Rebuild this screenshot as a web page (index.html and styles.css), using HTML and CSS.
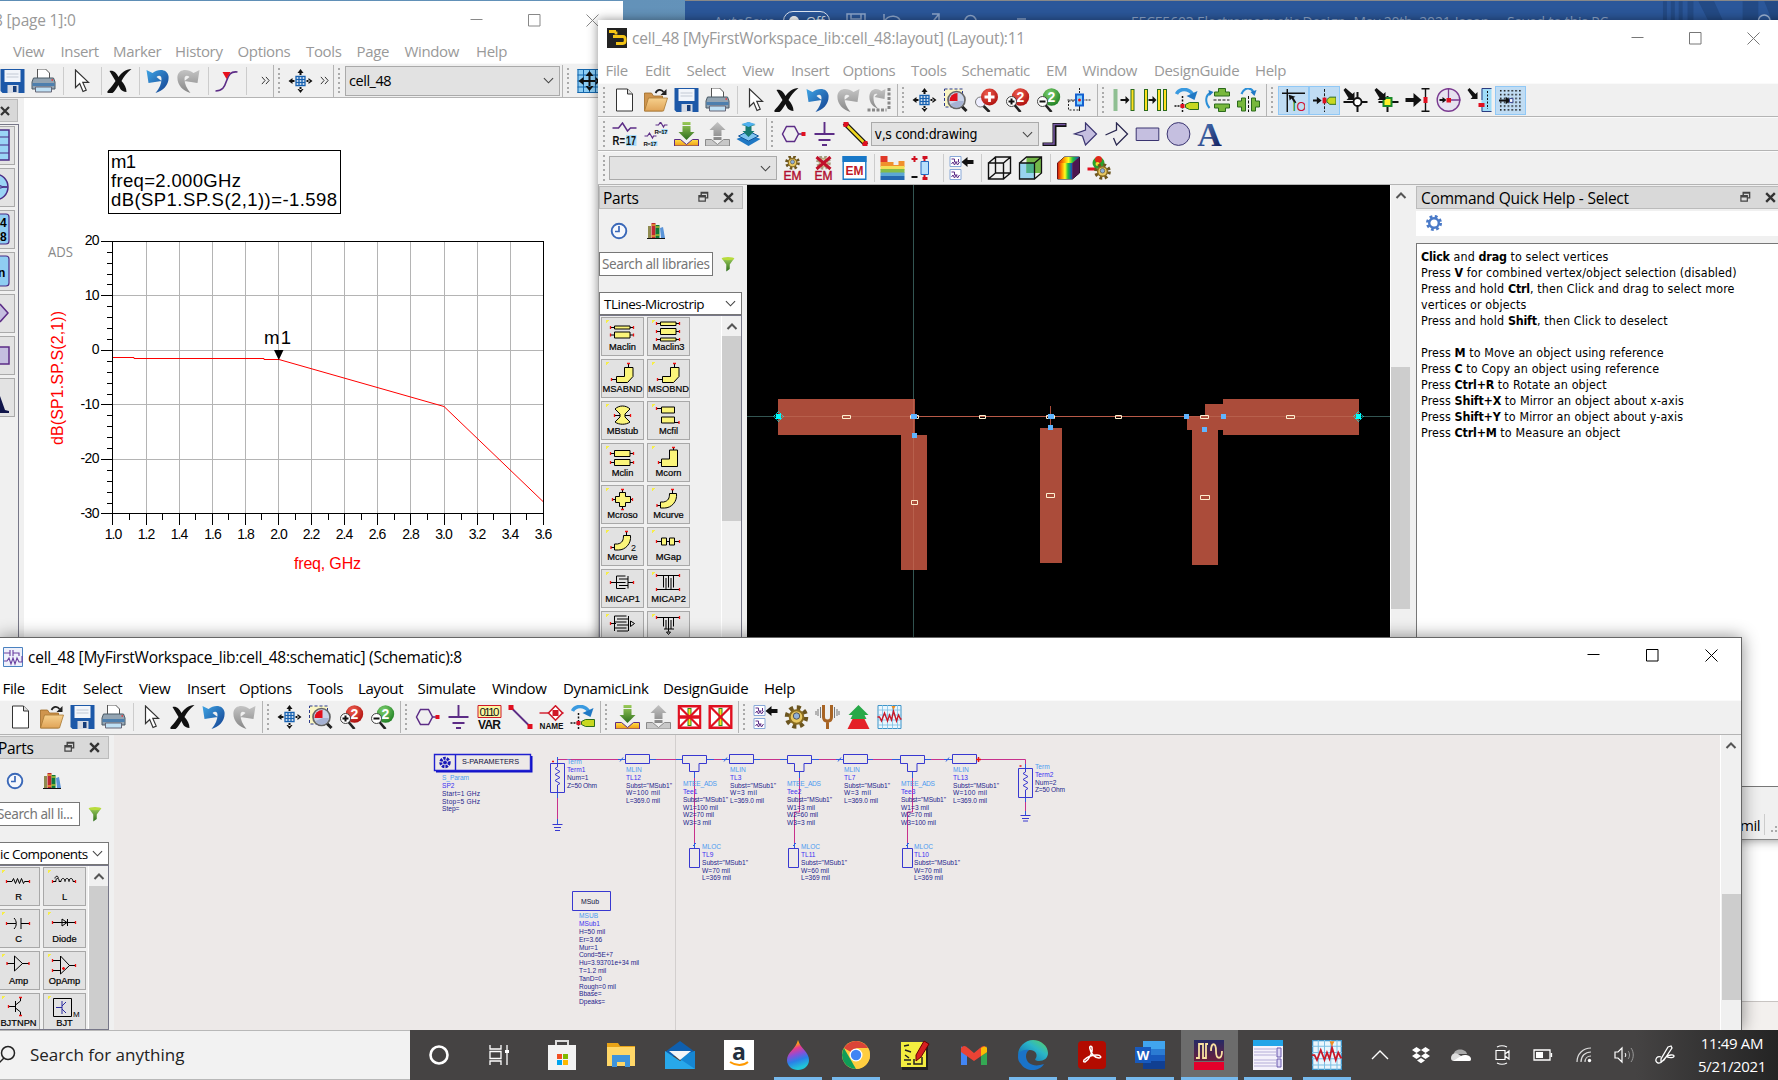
FILE: index.html
```html
<!DOCTYPE html>
<html lang="en">
<head>
<meta charset="utf-8">
<title>Desktop</title>
<link rel="stylesheet" href="styles.css">
</head>
<body>
<svg class="sprite" xmlns="http://www.w3.org/2000/svg">
  <defs>
    <linearGradient id="gBlue" x1="0" y1="0" x2="1" y2="1"><stop offset="0" stop-color="#3fa4e4"/><stop offset="1" stop-color="#123f8f"/></linearGradient>
    <linearGradient id="gFold" x1="0" y1="0" x2="0" y2="1"><stop offset="0" stop-color="#f6d08c"/><stop offset="1" stop-color="#e0a458"/></linearGradient>
    <linearGradient id="gGold" x1="0" y1="0" x2="0" y2="1"><stop offset="0" stop-color="#ffe14a"/><stop offset="1" stop-color="#f09a10"/></linearGradient>
    <linearGradient id="gGreen" x1="0" y1="0" x2="0" y2="1"><stop offset="0" stop-color="#9ccb5a"/><stop offset="1" stop-color="#2c6e1c"/></linearGradient>
    <linearGradient id="gGrey" x1="0" y1="0" x2="0" y2="1"><stop offset="0" stop-color="#c4c4c4"/><stop offset="1" stop-color="#868686"/></linearGradient>
    <linearGradient id="gNavy" x1="0" y1="0" x2="1" y2="1"><stop offset="0" stop-color="#5b8fd0"/><stop offset="1" stop-color="#0a1150"/></linearGradient>
    <linearGradient id="gRain" x1="0" y1="0" x2="1" y2="0"><stop offset="0" stop-color="#d01010"/><stop offset=".3" stop-color="#ff9d00"/><stop offset=".5" stop-color="#ffff20"/><stop offset=".7" stop-color="#20c040"/><stop offset="1" stop-color="#1040d0"/></linearGradient>
    <radialGradient id="gRed" cx=".4" cy=".3" r=".8"><stop offset="0" stop-color="#f06050"/><stop offset="1" stop-color="#a80808"/></radialGradient>
    <radialGradient id="gGrn" cx=".4" cy=".3" r=".8"><stop offset="0" stop-color="#7fd070"/><stop offset="1" stop-color="#177a1c"/></radialGradient>
    <linearGradient id="gDrop" x1="0" y1="0" x2=".25" y2="1"><stop offset="0" stop-color="#ffd400"/><stop offset=".22" stop-color="#ff9a1a"/><stop offset=".35" stop-color="#e83d8a"/><stop offset=".55" stop-color="#8a4fd8"/><stop offset=".75" stop-color="#2a7fe8"/><stop offset="1" stop-color="#21c4d8"/></linearGradient>
    <linearGradient id="gEdge" x1="1" y1="0" x2="0" y2="1"><stop offset="0" stop-color="#5fd35a"/><stop offset=".4" stop-color="#2bb6c8"/><stop offset="1" stop-color="#0d5cb0"/></linearGradient>
    <linearGradient id="gAds" x1="0" y1="0" x2="0" y2="1"><stop offset="0" stop-color="#262a66"/><stop offset="1" stop-color="#6a1f3c"/></linearGradient>
    <pattern id="dots" width="4" height="4" patternUnits="userSpaceOnUse"><rect x="1" y="1" width="1.6" height="1.6" fill="#111"/></pattern>
  </defs>

  <symbol id="new" viewBox="0 0 24 24"><path d="M4 1h11l5 5v17H4z" fill="#fff" stroke="#333"/><path d="M15 1v5h5" fill="#ddd" stroke="#333"/></symbol>
  <symbol id="open" viewBox="0 0 24 24"><path d="M1 23V5h7l2 3h9v15z" fill="#cf954e" stroke="#a06a24" stroke-width=".8"/><path d="M1 23L5 10h19l-4 13z" fill="url(#gFold)" stroke="#a87832" stroke-width=".8"/><path d="M12 5c2-4 6-4 8-1" fill="none" stroke="#222" stroke-width="1.7"/><path d="M23 1v6h-6z" fill="#222"/></symbol>
  <symbol id="save" viewBox="0 0 24 24"><path d="M0 0h24v24H2l-2-2z" fill="#1c58a8"/><path d="M4 1h16v12H4z" fill="#f2f5fa"/><path d="M6 5h12M6 8h12" stroke="#c2c9d4"/><path d="M7 16h11v8H7z" fill="#d5dae4"/><path d="M12.500 17h3.500v6h-3.500z" fill="#163c78"/></symbol>
  <symbol id="print" viewBox="0 0 24 24"><path d="M6 10V0h8l4 4v6" fill="#fff" stroke="#555"/><path d="M2 9h20l1.500 4v7H.5v-7z" fill="#93a4b2" stroke="#4a5a66"/><path d="M1 14h22v3H1z" fill="#4d7fae"/><path d="M4 18h16v5H4z" fill="#bfe0f4" stroke="#667"/><path d="M20 11h1.500" stroke="#e33" stroke-width="1.500"/></symbol>
  <symbol id="cursor" viewBox="0 0 24 24"><path d="M6 1v17.500l4.200-4 3.300 8 3.200-1.400-3.400-7.700h5.700z" fill="#fff" stroke="#333" stroke-width="1.200"/></symbol>
  <symbol id="del" viewBox="0 0 24 24"><path d="M2 2c4-1 7 2 9 6 3-4 7-8 13-8-5 4-8 8-10 12 3 3 5 7 5 11-5 0-7-4-8-7-2 3-4 7-6 8-4 1-7 0-4-3 3-3 5-6 7-9C6 9 4 5 2 2z" fill="#111"/></symbol>
  <symbol id="undo" viewBox="0 0 24 24"><path d="M1 1l2 13 13-2-5-4c2-2 5-2 5 2 0 5-2 9-6 14C18 22 24 15 23 7 22 0 13-1 7 4z" fill="url(#gBlue)"/></symbol>
  <symbol id="redo" viewBox="0 0 24 24"><path d="M23 1l-2 13-13-2 5-4c-2-2-5-2-5 2 0 5 2 9 6 14C6 22 0 15 1 7 2 0 11-1 17 4z" fill="url(#gGrey)"/></symbol>
  <symbol id="redo2" viewBox="0 0 24 24"><path d="M18 1l-1 10-10-2 3-3c-2-1-4 0-4 3 0 5 1 8 5 12C5 19 1 14 2 7 3 1 9-1 14 3z" fill="url(#gGrey)"/><path d="M0 22h19M21.500 0v22" stroke="#888" stroke-width="3" stroke-dasharray="3 1.500"/></symbol>
  <symbol id="mark" viewBox="0 0 24 24"><path d="M1 22c7 0 9-4 11-10s4-10 11-9" fill="none" stroke="#5c2c86" stroke-width="1.600"/><path d="M8 3h8l-4 7z" fill="#e8101c"/></symbol>
  <symbol id="fit" viewBox="0 0 24 24"><path d="M7.500 7.500h9v9h-9zM10.500 7v10M13.500 7v10M7 10.500h10M7 13.500h10" fill="#fff" stroke="#1560b0" stroke-width="1.300"/><path d="M12 0l3 4H9zM12 24l3-4H9zM0 12l4-3v6zM24 12l-4-3v6zM11 3h2v3h-2zM11 18h2v3h-2zM3 11h3v2H3zM18 11h3v2h-3z" fill="#111"/></symbol>
  <symbol id="fitb" viewBox="0 0 24 24"><path d="M0 0h24v24H0z" fill="#8ccdf4"/><path d="M.5 0v24M6 0v24M12 0v24M18 0v24M0 .5h24M0 6h24M0 12h24M0 18h24M0 23.500h24" stroke="#1466ac"/><path d="M12 2l4 5H8zM12 22l4-5H8zM1 12l5-4v8zM23 12l-5-4v8zM11 6h2v12h-2zM5 11h14v2H5z" fill="#111"/></symbol>
  <symbol id="zsel" viewBox="0 0 24 24"><path d="M1 1h18v18H1z" fill="#faf6c4" stroke="#2b3a8c" stroke-dasharray="3 2"/><path d="M17 17l6 6" stroke="#222" stroke-width="3"/><circle cx="13" cy="12" r="8.500" fill="#c9d3e8" stroke="#666" stroke-width="1.700"/><path d="M14 13V5a8 8 0 0 0-8 8z" fill="#e0101c"/><path d="M14 13h6a7 7 0 0 1-13 3z" fill="#8f9dc4" opacity=".6"/></symbol>
  <symbol id="zin" viewBox="0 0 24 24"><path d="M8 17l7 7" stroke="#222" stroke-width="2.600"/><circle cx="6" cy="14" r="5" fill="#eef" stroke="#777"/><circle cx="15" cy="9" r="8.500" fill="url(#gRed)"/><path d="M15 4v10M10 9h10" stroke="#fff" stroke-width="2.800"/></symbol>
  <symbol id="zp2" viewBox="0 0 24 24"><circle cx="15" cy="9" r="8.700" fill="url(#gRed)"/><text x="11" y="14" class="zt">2</text><path d="M9 17l6 7" stroke="#222" stroke-width="2.600"/><circle cx="6" cy="13.500" r="5" fill="#fff" stroke="#444"/><path d="M6 10.500v6M3 13.500h6" stroke="#111" stroke-width="2"/></symbol>
  <symbol id="zm2" viewBox="0 0 24 24"><circle cx="15" cy="9" r="8.700" fill="url(#gGrn)"/><text x="11" y="14" class="zt">2</text><path d="M9 17l6 7" stroke="#222" stroke-width="2.600"/><circle cx="6" cy="13.500" r="5" fill="#fff" stroke="#444"/><path d="M3 13.500h6" stroke="#111" stroke-width="2"/></symbol>
  <symbol id="ctr" viewBox="0 0 24 24"><path d="M1 13h11v9H1z" fill="none" stroke="#222" stroke-dasharray="2 1.500"/><path d="M12 0v24M0 12h24" stroke="#222" stroke-dasharray="2 1"/><path d="M8.500 6.500h7v11h-7z" fill="#7fd0ff" stroke="#1560d0" stroke-width="2"/><circle cx="12" cy="12" r="1.500" fill="#e11"/></symbol>
  <symbol id="al1" viewBox="0 0 24 24"><path d="M3 1v22" stroke="#8fbf92" stroke-width="4"/><path d="M20 1v22" stroke="#2b6a1c" stroke-width="4"/><path d="M20 2v20" stroke="#ffe020" stroke-width="2"/><path d="M8 11h5V8l4 4-4 4v-3H8z" fill="#111"/></symbol>
  <symbol id="al2" viewBox="0 0 24 24"><path d="M2.500 1v22M15.500 1v22M21.500 1v22" stroke="#2b6a1c" stroke-width="4"/><path d="M2.500 2v20M15.500 2v20M21.500 2v20" stroke="#ffe020" stroke-width="2"/><path d="M5 11h4V8l4 4-4 4v-3H5z" fill="#111"/></symbol>
  <symbol id="rot" viewBox="0 0 24 24"><path d="M2 6C5 0 14 0 18 6" fill="none" stroke="#3a9ae0" stroke-width="3.500"/><path d="M23 3l-3 9-8-4z" fill="#1f78c4"/><path d="M8 8v16" stroke="#111" stroke-dasharray="2 1.500" stroke-width="1.500"/><path d="M0 18h8" stroke="#111" stroke-dasharray="2 1" stroke-width="1.500"/><path d="M6 16h4v4H6z" fill="#e01020"/><path d="M11 16.500l4-2h9v7h-9l-4-2z" fill="#c8d820" stroke="#2b6a1c"/></symbol>
  <symbol id="mv" viewBox="0 0 24 24"><path d="M8 12h16" stroke="#111" stroke-dasharray="3 1.500"/><path d="M9 4h4V.500h7V4h4v4H9zM9 16h15v4h-4v3.500h-7V20H9z" fill="#78b83c" stroke="#2b6a1c"/><path d="M4 20C-1 14 0 7 5 5" fill="none" stroke="#2a8fd8" stroke-width="2"/><path d="M3 2l5 2-4 4z" fill="#1f78c4"/></symbol>
  <symbol id="mh" viewBox="0 0 24 24"><path d="M12 8v16" stroke="#111" stroke-dasharray="3 1.500"/><path d="M9 10H5v3H1v6h4v4h4zM15 10h4v3h4v6h-4v4h-4z" fill="#78b83c" stroke="#2b6a1c"/><path d="M5 6c3-7 9-7 12-2" fill="none" stroke="#2a8fd8" stroke-width="2.200"/><path d="M20 2l-2 6-4-4z" fill="#1f78c4"/></symbol>
  <symbol id="s1" viewBox="0 0 24 24"><path d="M0 4.500h24M5.500 0v24" stroke="#111" stroke-width="1.500"/><path d="M7 6l7 2-2 1 3 5-2 1-3-5-2 2z" fill="#111"/><text x="11" y="23" font-size="13" font-family="Liberation Sans" fill="#1b8a2c">I</text><text x="15" y="23" font-size="13" font-family="Liberation Sans" fill="#d01030">O</text></symbol>
  <symbol id="s2" viewBox="0 0 24 24"><path d="M12 0v24" stroke="#111" stroke-dasharray="3 1.500"/><path d="M0 11h4V8l5 4-5 4v-3H0z" fill="#111"/><path d="M10 9h4v6h-4z" fill="#e01020"/><path d="M14.500 11l3-2.500H24v7.500h-6.500l-3-2.500z" fill="#c8d820" stroke="#2b6a1c"/></symbol>
  <symbol id="s3" viewBox="0 0 24 24"><path d="M0 14h24M14 4v20" stroke="#111" stroke-width="2"/><circle cx="14" cy="14" r="4" fill="#fff" stroke="#111" stroke-width="1.800"/><path d="M0 2l2-2 7 6 2-2v8H3l2-2z" fill="#111"/></symbol>
  <symbol id="s4" viewBox="0 0 24 24"><path d="M4 14h20M13 8v16" stroke="#111" stroke-width="2"/><path d="M9 10h8v8H9z" fill="#fff22a" stroke="#1b8a2c" stroke-width="2"/><path d="M0 2l2-2 7 6 2-2v8H3l2-2z" fill="#111"/></symbol>
  <symbol id="s5" viewBox="0 0 24 24"><path d="M20 1v22M16 .700h8M16 23.300h8" stroke="#111" stroke-width="1.400"/><path d="M0 10h8V5l8 7-8 7v-5H0z" fill="#111"/><path d="M18 9h4v6h-4z" fill="#e01020"/></symbol>
  <symbol id="s6" viewBox="0 0 24 24"><circle cx="12" cy="12" r="11.300" fill="#e6e2f0" stroke="#7a3a90" stroke-width="1.400"/><path d="M12 0v12h12" fill="none" stroke="#7a3a90" stroke-width="1.300"/><path d="M3 11h3V9l4 3-4 3v-2H3z" fill="#111"/><path d="M10 10h4.500v4.500H10z" fill="#e01020"/></symbol>
  <symbol id="s7" viewBox="0 0 24 24"><path d="M14 0h10v24H14z" fill="#9fdcf8"/><path d="M14.500 12V.500H24M14.500 18v5.500H24" fill="none" stroke="#2c3c80"/><path d="M20 3v18" stroke="#111" stroke-dasharray="2 1.500"/><path d="M0 2l2-2 6 6 2-2v7H3l2-2z" fill="#111"/><path d="M11 15h6v4h-6z" fill="#e01020"/></symbol>
  <symbol id="s8" viewBox="0 0 24 24"><path d="M0 0h24v24H0z" fill="url(#dots)"/><path d="M0 11h7V8l5 4-5 4v-3H0z" fill="#111"/><path d="M11 10h3.500v4H11z" fill="#fff" stroke="#304090"/></symbol>
  <symbol id="r17" viewBox="0 0 24 24"><path d="M0 6h6l4-5 5 8 3-3h6" fill="none" stroke="#5c2c86" stroke-width="1.500"/><path d="M13.500 13H24v11H13.500z" fill="#a8dcf8"/><text x="0" y="23" class="rt" textLength="12.500" lengthAdjust="spacingAndGlyphs">R=</text><text x="13.500" y="23" class="rt" textLength="10" lengthAdjust="spacingAndGlyphs">17</text></symbol>
  <symbol id="r17b" viewBox="0 0 24 24"><path d="M12 3h3l2-3 3 5 1-2h3M1 14h3l2-3 3 5 1-2h3" fill="none" stroke="#5c2c86" stroke-width="1.200"/><path d="M18 7h6v5h-6zM8 19h6v5H8z" fill="#a8dcf8"/><text x="11" y="12" class="rts" textLength="13">R=17</text><text x="0" y="24" class="rts" textLength="13">R=17</text></symbol>
  <symbol id="push" viewBox="0 0 24 24"><path d="M0 17.500h6l6 5 6-5h6V24H0z" fill="url(#gGold)" stroke="#5c2c86"/><path d="M8 0h8v3H8zM8 4h8v6h4l-8 8-8-8h4z" fill="url(#gGreen)"/></symbol>
  <symbol id="pop" viewBox="0 0 24 24"><path d="M0 17.500h6l6 5 6-5h6V24H0z" fill="#c8c8c8" stroke="#8a8a8a"/><path d="M8 15h8v3H8zM8 14h8V8h4l-8-8-8 8h4z" fill="url(#gGrey)"/></symbol>
  <symbol id="lay" viewBox="0 0 24 24"><path d="M0 17l12-5 12 5-12 7z" fill="#1f78c4"/><path d="M2 14l10-5 10 5-10 5z" fill="#7fc4f0" stroke="#14589c"/><path d="M5 3l7-3 7 3-4 1v5h3l-6 6-6-6h3V4z" fill="#177a70"/><path d="M5 2l7-2 7 2-7 3z" fill="#4fb0f0"/></symbol>
  <symbol id="port" viewBox="0 0 24 24"><path d="M1 12l4-7.500h8l4 7.500-4 7.500H5z" fill="none" stroke="#5c2c86" stroke-width="1.500"/><path d="M17 12h4" stroke="#5c2c86" stroke-width="1.500"/><path d="M20 10h4v4h-4z" fill="#e01020"/></symbol>
  <symbol id="gnd" viewBox="0 0 24 24"><path d="M12 0v12M2 12h20M6 18h12M9.500 23h5" stroke="#5c2c86" stroke-width="1.900"/></symbol>
  <symbol id="pen" viewBox="0 0 24 24"><path d="M1 1l22 22" stroke="#111" stroke-width="5"/><path d="M4 4l16 16" stroke="#f0d820" stroke-width="2.500"/><path d="M0 0h5v3L3 5H0zM24 24h-5v-3l2-2h3z" fill="#e01020"/></symbol>
  <symbol id="step" viewBox="0 0 24 24"><path d="M0 22.500h12V3h12" fill="none" stroke="#111" stroke-width="4"/><path d="M1 22h10.500V2.500H23" fill="none" stroke="#7a5aa8" stroke-width="1.500"/></symbol>
  <symbol id="poly" viewBox="0 0 24 24"><path d="M12 1l11 11-11 11-3-9-8-2 11-4z" fill="#c5bfe0" stroke="#3a3470" stroke-width="1.200"/></symbol>
  <symbol id="pline" viewBox="0 0 24 24"><path d="M1 13l11-5V1l11 11-11 11-3-7" fill="none" stroke="#2a2850" stroke-width="1.300"/></symbol>
  <symbol id="rect" viewBox="0 0 24 24"><path d="M.7 6h22.600v12.500H.7z" fill="#c5bfe0" stroke="#3a3470"/></symbol>
  <symbol id="circ" viewBox="0 0 24 24"><circle cx="12" cy="12" r="11.400" fill="#c5bfe0" stroke="#3a3470"/></symbol>
  <symbol id="txt" viewBox="0 0 24 24"><text x="12" y="23.500" text-anchor="middle" font-family="Liberation Serif" font-weight="bold" font-size="34" fill="url(#gNavy)">A</text></symbol>
  <symbol id="gear" viewBox="0 0 24 24"><circle cx="12" cy="12" r="8" fill="none" stroke="#6b5520" stroke-width="7.500" stroke-dasharray="3.300 2.983"/><circle cx="12" cy="12" r="6.800" fill="#e8c860" stroke="#8a6c20" stroke-width="2"/><circle cx="12" cy="11" r="3.200" fill="#8fb0d8" stroke="#555"/></symbol>
  <symbol id="em1" viewBox="0 0 24 24"><use href="#gear" x="4" y="-1" width="16" height="15"/><text x="12" y="24" class="em">EM</text></symbol>
  <symbol id="em2" viewBox="0 0 24 24"><g opacity=".55"><use href="#gear" x="4" y="-1" width="16" height="15"/></g><path d="M5 1l14 12M19 1L5 13" stroke="#c0102a" stroke-width="3"/><text x="12" y="24" class="em">EM</text></symbol>
  <symbol id="em3" viewBox="0 0 24 24"><path d="M.7.7h22.600v22.600H.7z" fill="#fff" stroke="#1878c8" stroke-width="1.400"/><path d="M0 0h24v6H0z" fill="#1878c8"/><text x="12" y="18.500" class="emb">EM</text></symbol>
  <symbol id="sub" viewBox="0 0 24 24"><path d="M0 0h7v6H0z" fill="#e03828"/><path d="M0 6h13v3h5V5h6v6H0z" fill="#f0902c"/><path d="M0 10h24v4H0z" fill="#f4e058"/><path d="M0 13h24v4H0z" fill="#84bc48"/><path d="M0 16.500h24V20H0z" fill="#5ca8d4"/><path d="M0 20h24v4H0z" fill="#2468b0"/></symbol>
  <symbol id="pm" viewBox="0 0 24 24"><path d="M0 3h6M3 0v6" stroke="#d01020" stroke-width="2"/><path d="M0 21h6" stroke="#111" stroke-width="2"/><path d="M13 0v24" stroke="#d01020" stroke-width="2"/><path d="M11 0h5v3h-5zM11 21h5v3h-5z" fill="#d01020"/><path d="M9.500 5.500h7.500v13H9.500z" fill="#b8e0fc" stroke="#2468c0"/></symbol>
  <symbol id="sch" viewBox="0 0 24 24"><path d="M.5.500h11v10H.5zM.5 13.500h11v10H.5z" fill="#fff" stroke="#88a8d8"/><path d="M2 3h3v3h3M2 8l1.500-2L5 9l1.500-3L8 9l2-3M2 16h3v3h3M2 21l1.500-2L5 22l1.500-3L8 22l2-3M9 3v3" fill="none" stroke="#5c2c86"/><path d="M12 6l6-5v3h6v4h-6v3z" fill="#111"/></symbol>
  <symbol id="cube" viewBox="0 0 24 24"><path d="M1 7h15v16H1zM8 1h15v16H8zM1 7l7-6M16 7l7-6M1 23l7-6M16 23l7-6" fill="none" stroke="#111" stroke-width="1.400"/></symbol>
  <symbol id="cubec" viewBox="0 0 24 24"><path d="M1 7h15v16H1z" fill="#98d4f0"/><path d="M8 1h15v16H8z" fill="#74b848"/><path d="M8 7h8v10H8z" fill="#4cb088"/><path d="M1 7h15v16H1zM1 7l7-6h15v16l-7 6M16 7l7-6" fill="none" stroke="#111" stroke-width="1.300"/></symbol>
  <symbol id="rain" viewBox="0 0 24 24"><path d="M1 7l7-6h15v16l-7 6H1z" fill="#c04018" stroke="#111"/><path d="M1 7l7-6h15l-7 6z" fill="url(#gRain)"/><path d="M1 7h15v16H1z" fill="url(#gRain)"/><path d="M16 7l7-6v16l-7 6z" fill="#4c1650"/></symbol>
  <symbol id="ball" viewBox="0 0 24 24"><path d="M0 13h8" stroke="#e01020" stroke-width="3"/><circle cx="11" cy="7" r="6" fill="#2ba02c"/><circle cx="11" cy="3.500" r="3.500" fill="#e02818"/><circle cx="10" cy="8" r="2" fill="#f0e030"/><use href="#gear" x="6" y="7" width="18" height="17"/></symbol>
  <symbol id="var" viewBox="0 0 24 24"><path d="M.5.500h23v12H.5z" fill="#fdf6a0" stroke="#d01828"/><text x="12" y="11" text-anchor="middle" font-family="Liberation Sans" font-size="11.500" textLength="20" fill="#111">0110</text><text x="12" y="24" class="vt" textLength="23" font-size="12">VAR</text></symbol>
  <symbol id="wire" viewBox="0 0 24 24"><path d="M2 2l20 20" stroke="#5c2c86" stroke-width="1.800"/><path d="M0 0h5v5H0zM19 19h5v5h-5z" fill="#e01020"/></symbol>
  <symbol id="name" viewBox="0 0 24 24"><path d="M0 8h24" stroke="#d01828" stroke-width="1.400"/><path d="M16 .800L23 8l-7 7.200L9 8z" fill="#fff" stroke="#d01828" stroke-width="1.600"/><path d="M13 5h6v6h-6z" fill="#d01828"/><text x="12" y="24" class="vt" textLength="24" lengthAdjust="spacingAndGlyphs" font-size="9.500">NAME</text></symbol>
  <symbol id="dx" viewBox="0 0 24 24"><path d="M1.200 1.200h21.600v21.600H1.200z" fill="#fff" stroke="#e01020" stroke-width="2.400"/><path d="M12 3v18" stroke="#2b8a1c" stroke-width="4"/><path d="M12 4v16" stroke="#ffe020" stroke-width="2"/><path d="M2 2l20 20M22 2L2 22" stroke="#e01020" stroke-width="2.200"/></symbol>
  <symbol id="dx2" viewBox="0 0 24 24"><use href="#dx" width="24" height="24"/><path d="M1 12h22" stroke="#e01020" stroke-width="3.500"/></symbol>
  <symbol id="fork" viewBox="0 0 24 24"><path d="M8 0v12c0 3 2 4 4 4s4-1 4-4V0M12 15v9" fill="none" stroke="#a86424" stroke-width="3"/><path d="M5 2v11M2.500 4v7M.5 6v4M19 2v11M21.500 4v7M23.500 6v4" stroke="#777"/></symbol>
  <symbol id="opt" viewBox="0 0 24 24"><path d="M12 0l10 10h-4l2 4H4l2-4H2z" fill="#28a848"/><path d="M6 14h12l5 10H1z" fill="#e42028"/></symbol>
  <symbol id="plot" viewBox="0 0 24 24"><path d="M.5.500h23v23H.5z" fill="#eaf6fd" stroke="#3f94c8"/><path d="M5 0v24M10 0v24M15 0v24M20 0v24M0 5h24M0 10h24M0 15h24M0 20h24" stroke="#7cc0e4" stroke-width=".8"/><path d="M0 12h2l2 4 3-8 3 8 2-6 2 5 2-9 3 10 2-6 2 4h1" fill="none" stroke="#c81828" stroke-width="1.400"/><path d="M14 1h4l-2 4z" fill="#f08c20"/></symbol>
  <symbol id="float" viewBox="0 0 12 12"><path d="M3.500 4V1h7v6H8" fill="none" stroke="#444" stroke-width="1.500"/><path d="M1 4.500h7v6H1z" fill="none" stroke="#444" stroke-width="1.300"/><path d="M1 5.500h7M3.500 1.500h7" stroke="#444" stroke-width="2"/></symbol>
  <symbol id="x" viewBox="0 0 12 12"><path d="M2 2l8 8M10 2l-8 8" stroke="#333" stroke-width="2.200"/></symbol>
  <symbol id="clock" viewBox="0 0 18 18"><circle cx="9" cy="9" r="7.300" fill="#f6f8fc" stroke="#3a68b8" stroke-width="1.900"/><path d="M9 4v5.500H5" fill="none" stroke="#3a68b8" stroke-width="1.700"/></symbol>
  <symbol id="books" viewBox="0 0 18 18"><path d="M1 4h3v12H1z" fill="#8f8b50"/><path d="M4.500 1h4v15h-4z" fill="#c02830"/><path d="M8.500 3h4v13h-4z" fill="#107838"/><path d="M13 6l3-1 2 11h-4z" fill="#5a94d8"/><path d="M4.500 3h4M8.500 5h4M8.500 13h4M4.500 14h4" stroke="#f4e030"/><path d="M0 16.500h18" stroke="#111"/></symbol>
  <symbol id="filter" viewBox="0 0 16 18"><path d="M1 2h14l-5 7v5l-4 3V9z" fill="url(#gGreen)"/><ellipse cx="8" cy="2.200" rx="7.300" ry="1.800" fill="#b8dc3c"/></symbol>
  <symbol id="cog" viewBox="0 0 18 18"><circle cx="9" cy="9" r="6.500" fill="none" stroke="#4a7ac8" stroke-width="3" stroke-dasharray="2.700 2.405"/><circle cx="9" cy="9" r="4.800" fill="none" stroke="#4a7ac8" stroke-width="2.400"/></symbol>
  <symbol id="chev" viewBox="0 0 12 12"><path d="M1 3.500l5 5 5-5" fill="none" stroke="#444" stroke-width="1.200"/></symbol>
  <symbol id="up" viewBox="0 0 12 12"><path d="M1.500 8L6 3.500 10.500 8" fill="none" stroke="#555" stroke-width="2"/></symbol>
  <symbol id="more" viewBox="0 0 10 12"><path d="M1 2l3.500 4L1 10M5.500 2L9 6l-3.500 4" fill="none" stroke="#333" stroke-width="1.100"/></symbol>
  <symbol id="min" viewBox="0 0 13 13"><path d="M.5 5.500h12" stroke="currentColor"/></symbol>
  <symbol id="max" viewBox="0 0 13 13"><path d="M.5.500h11.500v11.500H.5z" fill="none" stroke="currentColor"/></symbol>
  <symbol id="close" viewBox="0 0 13 13"><path d="M.5.500l12 12M12.500.500L.5 12.500" stroke="currentColor"/></symbol>

  <!-- palette parts -->
  <symbol id="p-maclin" viewBox="0 0 43 27"><path class="ln" d="M10 10.500h23M10 18h23"/><path class="yb" d="M13.500 9h15.500v3H13.500zM13.500 15h15.500v6H13.500z"/><path class="rd" d="M9.500 9v3M32.500 9v3M9.500 16.500v3M32.500 16.500v3"/></symbol>
  <symbol id="p-maclin3" viewBox="0 0 43 27"><path class="ln" d="M10 6.500h23M10 14.500h23M10 22.500h23"/><path class="yb" d="M13.500 5h15.500v3.500H13.500zM13.500 11.500h15.500v6H13.500zM13.500 21h15.500v3H13.500z"/><path class="rd" d="M9.500 5v3M32.500 5v3M9.500 13v3M32.500 13v3M9.500 21v3M32.500 21v3"/></symbol>
  <symbol id="p-bend" viewBox="0 0 43 27"><path class="ln" d="M11 20.500h5M27.500 4v5"/><path class="yb" d="M15.500 17.500h8v-9h8.500v9l-5.500 6H15.500z"/><path class="rd" d="M10.500 19v3M26 4.500h3"/></symbol>
  <symbol id="p-stub" viewBox="0 0 43 27"><path class="ln" d="M14 14.500h15"/><path class="yb" d="M14 8c4-4 11-4 15 0l-5 5v3l5 5c-4 3-11 3-15 0l5-5v-3z"/><path class="rd" d="M13.500 13v3M29.500 13v3"/></symbol>
  <symbol id="p-mcfil" viewBox="0 0 43 27"><path class="ln" d="M10 7.500h5M27 21.500h5"/><path class="yb" d="M14.500 6h13v6h-13zM14.500 16h13v6h-13z"/><path class="rd" d="M9.500 6v3M32 20v3"/></symbol>
  <symbol id="p-mclin" viewBox="0 0 43 27"><path class="ln" d="M10 10.500h23M10 19.500h23"/><path class="yb" d="M13.500 7.500h15.500v6H13.500zM13.500 16.500h15.500v6H13.500z"/><path class="rd" d="M9.500 9v3M32.500 9v3M9.500 18v3M32.500 18v3"/></symbol>
  <symbol id="p-corn" viewBox="0 0 43 27"><path class="ln" d="M11 19.500h5M26.500 4v5"/><path class="yb" d="M14.500 16h8V7h8v16.500h-16z"/><path class="rd" d="M11.500 18v3M25 4.500h3"/></symbol>
  <symbol id="p-cross" viewBox="0 0 43 27"><path class="ln" d="M11 14.500h21M21.500 4v20"/><path class="yb" d="M18.500 7.500h6v4h5v6h-5v4h-6v-4h-4v-6h4z"/><path class="rd" d="M11.500 13v3M31.500 13v3M20 4.500h3M20 24.500h3"/></symbol>
  <symbol id="p-curve" viewBox="0 0 43 27"><path class="ln" d="M10 20.500h5M25.500 4v5"/><path class="yb" d="M13.500 17h3c5-1 6-4 6-8.500h7c1 8-5 14.500-12 14.500h-4z"/><path class="rd" d="M10 19v3M24 4.500h3"/></symbol>
  <symbol id="p-gap" viewBox="0 0 43 27"><path class="ln" d="M10 14.500h22"/><path class="yb" d="M14.500 11h5v7h-5zM22.500 11h5v7h-5z"/><path class="rd" d="M9.500 13v3M32.500 13v3"/></symbol>
  <symbol id="p-cap1" viewBox="0 0 43 27"><path class="ln" d="M10 13.500h7M27 13.500h6M15.500 7v12.500M27 7v12.500M15.500 7h9M18 10h9M15.500 13.500h9M18 16.500h9M15.500 19.500h9"/><path class="rd" d="M9.500 12v3M32.500 12v3"/></symbol>
  <symbol id="p-cap2" viewBox="0 0 43 27"><path class="ln" d="M10 6.500h23M10 20.500h23M16.500 6.500v12M19 9v11.500M21.500 6.500v12M24 9v11.500M26.500 6.500v12"/><path class="rd" d="M9.500 5v3M32.500 5v3M9.500 19v3M32.500 19v3"/></symbol>
  <symbol id="p-cap3" viewBox="0 0 43 27"><path class="ln" d="M10 12.500h5M13.500 5v15M27.500 5v15M13.500 5h12M16 8h11M13.500 11h12M16 14h11M13.500 17h12M16 20h11M29.500 10l4 2.500-4 3z"/><path class="rd" d="M9.500 11v3"/></symbol>
  <symbol id="p-cap4" viewBox="0 0 43 27"><path class="ln" d="M10 6.500h23M16.500 6.500v9M19 9v9M21.500 6.500v14M24 9v9M26.500 6.500v9M17 18h10M19.500 21h4l-2 2.500z"/><path class="rd" d="M9.500 5v3M32.500 5v3"/></symbol>
  <symbol id="p-r" viewBox="0 0 43 27"><path class="ln" d="M10 14.500h5l1.500-3 2 5 2-5 2 5 2-5 2 5 1-2h5"/><path class="rd" d="M9.500 13v3M32.500 13v3"/></symbol>
  <symbol id="p-l" viewBox="0 0 43 27"><path class="ln" d="M10 14.500h3c-1-4 4-4 3 0h2c0-4 4-4 4 0 0-4 4-4 4 0 0-4 4-4 4 0h3M12 11.500c0-3 4-3 3 0"/><path class="rd" d="M9.500 13v3M32.500 13v3"/></symbol>
  <symbol id="p-c" viewBox="0 0 43 27"><path class="ln" d="M10 14.500h9M24 14.500h9M24 9v11M17 9c3 3 3 8 0 11"/><path class="rd" d="M9.500 13v3M32.500 13v3"/></symbol>
  <symbol id="p-d" viewBox="0 0 43 27"><path class="ln" d="M10 13.500h23M19 10v7l5-3.500zM24.500 10v7"/><path class="rd" d="M9.500 12v3M32.500 12v3"/></symbol>
  <symbol id="p-amp" viewBox="0 0 43 27"><path class="ln" d="M10 12.500h8M25 12.500h7M17.500 5v15l8-7.500z"/><path class="rd" d="M10 11v3M32 11v3"/></symbol>
  <symbol id="p-op" viewBox="0 0 43 27"><path class="ln" d="M10 9.500h8M10 19.500h8M26 14.500h7M17.500 5v18l9-8.500z"/><path class="rd" d="M9.500 8v3M9.500 18v3M32.500 13v3M19 17.500h3M20.500 16v3"/></symbol>
  <symbol id="p-npn" viewBox="0 0 43 27"><path class="ln" d="M12 13.500h6M18.500 8v11M18.500 12l5-4V5M18.500 15l5 4v3"/><path class="rd" d="M11.500 12v3M22 4.500h3M22 22.500h3"/></symbol>
  <symbol id="p-bjt" viewBox="0 0 43 27"><path class="ln" d="M10.500 5.500h18v18h-18z"/><path d="M13 14.500h6M19 8v13M19 13l4-4M19 16l4 4" fill="none" stroke="#2a2aa0"/><text x="30" y="24" font-size="8" font-family="Liberation Sans">M</text></symbol>
</svg>

<main class="desktop">
  <section class="word">
    <span class="autosave">AutoSave</span><span class="toggle"><i></i>Off</span>
    <svg class="wicons" viewBox="0 0 200 20"><path d="M1 20V1h18v19M5 1v5h10V1M5 20v-8h10v8M38 1v8M38 9c4-8 16-8 17 2v5M86 1h7v7M93 1L84 12M98 8v7M119 8a5.500 5.500 0 1 1 11 0c0 4-2 4-3 8h-5c-1-4-3-4-3-8M171 6h9" fill="none" stroke="#8fa7cc" stroke-width="1.500"/></svg>
    <span class="wtitle">EECE5603 Electromagnetic Design- May 20th, 2021-Jason&nbsp; -&nbsp; Saved to this PC</span>
    <svg class="wdeco" viewBox="0 0 118 20"><path d="M1 0h4v20H1zM9 0h4v20H9zM17 0h4v20h-4zM26 0h6v20h-6zM37 0h16l9 20H47zM82 0h16v20H82zM104 0h14v20h-6z" fill="#234a85"/><circle cx="104" cy="20" r="6" fill="none" stroke="#9fb4d4" stroke-width="1.500"/></svg>
  </section>

  <section class="win dds">
    <header class="title"><span class="tt">8 [page 1]:0</span>
      <span class="ctl"><svg><use href="#min"/></svg><svg><use href="#max"/></svg><svg><use href="#close"/></svg></span></header>
    <nav class="menu m-dds"><span>View</span><span>Insert</span><span>Marker</span><span>History</span><span>Options</span><span>Tools</span><span>Page</span><span>Window</span><span>Help</span></nav>
    <div class="bar bar-dds">
      <svg class="i"><use href="#save"/></svg><svg class="i"><use href="#print"/></svg><b class="sep"></b><svg class="i"><use href="#cursor"/></svg><b class="sep"></b><svg class="i"><use href="#del"/></svg><b class="sep"></b><svg class="i"><use href="#undo"/></svg><svg class="i"><use href="#redo"/></svg><b class="sep"></b><svg class="i"><use href="#mark"/></svg><b class="sep"></b><svg class="more m1"><use href="#more"/></svg>
      <b class="grip"></b><svg class="i"><use href="#fit"/></svg><svg class="more m2"><use href="#more"/></svg>
      <b class="grip"></b><div class="combo c-cell">cell_48<svg><use href="#chev"/></svg></div>
      <b class="grip"></b><svg class="i"><use href="#fitb"/></svg>
    </div>
    <div class="dds-body">
      <aside class="dds-tools">
        <div class="tx"><svg><use href="#x"/></svg></div>
        <div class="tools">
          <div><svg viewBox="0 0 16 38"><path d="M-6 4h15v30H-6z" fill="#9ad4f6" stroke="#4b2c86" stroke-width="1.500"/><path d="M0 11h9M0 19h9M0 27h9" stroke="#4b2c86"/></svg></div>
          <div><svg viewBox="0 0 16 38"><circle cx="-5" cy="19" r="13" fill="#9ad4f6" stroke="#4b2c86" stroke-width="1.500"/><path d="M0 19h8M-4 24c4-5 8-5 11-5-4 0-8-1-11-5" fill="none" stroke="#4b2c86"/></svg></div>
          <div><svg viewBox="0 0 16 38"><path d="M-6 4h12q3 0 3 3v24q0 3-3 3H-6z" fill="#8fcdf2" stroke="#4b2c86" stroke-width="1.200"/><text x="0" y="17" class="tl">4</text><text x="0" y="31" class="tl">8</text></svg></div>
          <div><svg viewBox="0 0 16 38"><path d="M-6 4h12q3 0 3 3v24q0 3-3 3H-6z" fill="#8fcdf2" stroke="#4b2c86" stroke-width="1.200"/><text x="-2" y="25" class="tl">n</text></svg></div>
          <div><svg viewBox="0 0 16 38"><path d="M0 10l8 9-8 9" fill="#c5bfe0" stroke="#5c2c86" stroke-width="1.500"/></svg></div>
          <div><svg viewBox="0 0 16 38"><path d="M-3 11h12v17H-3z" fill="#c5bfe0" stroke="#5c2c86" stroke-width="1.500"/></svg></div>
          <div><svg viewBox="0 0 16 38"><path d="M0 18l5 14 4 1v2H0z" fill="#10154a"/></svg></div>
        </div>
      </aside>
      <svg class="graph" viewBox="24 98 574 540">
        <rect x="108.500" y="150.500" width="232" height="63" fill="#fff" stroke="#000"/>
        <g class="ar" font-size="18.500"><text x="111" y="168" textLength="25">m1</text><text x="111" y="187" textLength="130">freq=2.000GHz</text><text x="111" y="206" textLength="226">dB(SP1.SP.S(2,1))=-1.598</text></g>
        <path d="M146.500 242v271M179.500 242v271M212.500 242v271M245.500 242v271M278.500 242v271M311.500 242v271M344.500 242v271M377.500 242v271M410.500 242v271M444.500 242v271M477.500 242v271M510.500 242v271M113 295.500h430M113 350.500h430M113 404.500h430M113 459.500h430" stroke="#b4b4b4"/>
        <rect x="112.500" y="241.500" width="431" height="272" fill="none" stroke="#000"/>
        <path d="M101 241.500h12M101 295.500h12M101 350.500h12M101 404.500h12M101 459.500h12M101 513.500h12M107 252.500h5M107 263.500h5M107 274.500h5M107 284.500h5M107 306.500h5M107 317.500h5M107 328.500h5M107 339.500h5M107 361.500h5M107 372.500h5M107 383.500h5M107 394.500h5M107 415.500h5M107 426.500h5M107 437.500h5M107 448.500h5M107 470.500h5M107 481.500h5M107 492.500h5M107 503.500h5M112.500 513v12M146.500 513v12M179.500 513v12M212.500 513v12M245.500 513v12M278.500 513v12M311.500 513v12M344.500 513v12M377.500 513v12M410.500 513v12M444.500 513v12M477.500 513v12M510.500 513v12M543.500 513v12M129.500 513v7M162.500 513v7M195.500 513v7M228.500 513v7M261.500 513v7M295.500 513v7M328.500 513v7M361.500 513v7M394.500 513v7M427.500 513v7M461.500 513v7M493.500 513v7M526.500 513v7" stroke="#000"/>
        <path d="M113 357.500h21l0 1h130l0 1h15l165 47 99 95" fill="none" stroke="#f00"/>
        <path d="M274 350h9.500l-4.700 10z"/>
        <text x="264" y="344" class="ar" font-size="18.500" textLength="27">m1</text>
        <g class="ar yl" font-size="14"><text x="99" y="245">20</text><text x="99" y="299.500">10</text><text x="99" y="354">0</text><text x="99" y="408.500">-10</text><text x="99" y="463">-20</text><text x="99" y="517.500">-30</text></g>
        <g class="ar xl" font-size="14"><text x="113" y="539">1.0</text><text x="146" y="539">1.2</text><text x="179" y="539">1.4</text><text x="212.500" y="539">1.6</text><text x="245.500" y="539">1.8</text><text x="278.500" y="539">2.0</text><text x="311" y="539">2.2</text><text x="344" y="539">2.4</text><text x="377" y="539">2.6</text><text x="410.500" y="539">2.8</text><text x="443.500" y="539">3.0</text><text x="477" y="539">3.2</text><text x="510" y="539">3.4</text><text x="543" y="539">3.6</text></g>
        <g class="ar" fill="#f00" font-size="16"><text x="294" y="568.500" textLength="67">freq, GHz</text><text transform="translate(63 445) rotate(-90)" textLength="134">dB(SP1.SP.S(2,1))</text></g>
        <text x="48" y="257" font-family="Open Sans" font-size="14" textLength="25" lengthAdjust="spacingAndGlyphs" fill="#888">ADS</text>
      </svg>
    </div>
  </section>

  <section class="win layout">
    <header class="title"><svg class="app" viewBox="0 0 20 20"><path d="M0 0h20v20H0z" fill="#222"/><path d="M2 3.500h7M6 8.500h10c3 0 3 7 0 7H9M9 3.500v3" fill="none" stroke="#f2c316" stroke-width="2.800"/></svg><span class="tt">cell_48 [MyFirstWorkspace_lib:cell_48:layout] (Layout):11</span>
      <span class="ctl"><svg><use href="#min"/></svg><svg><use href="#max"/></svg><svg><use href="#close"/></svg></span></header>
    <nav class="menu m-lay"><span>File</span><span>Edit</span><span>Select</span><span>View</span><span>Insert</span><span>Options</span><span>Tools</span><span>Schematic</span><span>EM</span><span>Window</span><span>DesignGuide</span><span>Help</span></nav>
    <div class="bar">
      <b class="grip first"></b><svg class="i"><use href="#new"/></svg><svg class="i"><use href="#open"/></svg><svg class="i"><use href="#save"/></svg><svg class="i"><use href="#print"/></svg><b class="sep"></b><svg class="i"><use href="#cursor"/></svg><svg class="i"><use href="#del"/></svg><svg class="i"><use href="#undo"/></svg><svg class="i"><use href="#redo"/></svg><svg class="i"><use href="#redo2"/></svg>
      <b class="grip"></b><svg class="i"><use href="#fit"/></svg><svg class="i"><use href="#zsel"/></svg><svg class="i"><use href="#zin"/></svg><svg class="i"><use href="#zp2"/></svg><svg class="i"><use href="#zm2"/></svg><svg class="i"><use href="#ctr"/></svg>
      <b class="grip"></b><svg class="i"><use href="#al1"/></svg><svg class="i"><use href="#al2"/></svg><svg class="i"><use href="#rot"/></svg><svg class="i"><use href="#mv"/></svg><svg class="i"><use href="#mh"/></svg>
      <b class="grip"></b><svg class="i on"><use href="#s1"/></svg><svg class="i on"><use href="#s2"/></svg><svg class="i"><use href="#s3"/></svg><svg class="i"><use href="#s4"/></svg><svg class="i"><use href="#s5"/></svg><svg class="i"><use href="#s6"/></svg><svg class="i"><use href="#s7"/></svg><svg class="i on"><use href="#s8"/></svg>
    </div>
    <div class="bar">
      <b class="grip first"></b><svg class="i"><use href="#r17"/></svg><svg class="i"><use href="#r17b"/></svg><svg class="i"><use href="#push"/></svg><svg class="i"><use href="#pop"/></svg><svg class="i"><use href="#lay"/></svg>
      <b class="grip"></b><svg class="i"><use href="#port"/></svg><svg class="i"><use href="#gnd"/></svg><svg class="i"><use href="#pen"/></svg><div class="combo">v,s cond:drawing<svg><use href="#chev"/></svg></div><svg class="i"><use href="#step"/></svg><svg class="i"><use href="#poly"/></svg><svg class="i"><use href="#pline"/></svg><svg class="i"><use href="#rect"/></svg><svg class="i"><use href="#circ"/></svg><svg class="i"><use href="#txt"/></svg>
    </div>
    <div class="bar bar-em">
      <b class="grip first"></b><div class="combo">&nbsp;<svg><use href="#chev"/></svg></div><svg class="i"><use href="#em1"/></svg><svg class="i"><use href="#em2"/></svg><svg class="i"><use href="#em3"/></svg><b class="sep"></b><svg class="i"><use href="#sub"/></svg><svg class="i"><use href="#pm"/></svg><b class="sep"></b><svg class="i"><use href="#sch"/></svg><b class="sep"></b><svg class="i"><use href="#cube"/></svg><svg class="i"><use href="#cubec"/></svg><b class="sep"></b><svg class="i"><use href="#rain"/></svg><svg class="i"><use href="#ball"/></svg>
    </div>
    <div class="lay-body">
      <aside class="parts">
        <div class="phead"><span>Parts</span><svg class="pf"><use href="#float"/></svg><svg class="px"><use href="#x"/></svg></div>
        <div class="ptabs"><svg><use href="#clock"/></svg><svg><use href="#books"/></svg></div>
        <div class="psearch"><span class="inp">Search all libraries</span><svg><use href="#filter"/></svg></div>
        <div class="pcombo"><span>TLines-Microstrip</span><svg><use href="#chev"/></svg></div>
        <div class="plist">
          <div class="cells">
            <div class="cell"><svg><use href="#p-maclin"/></svg>Maclin</div><div class="cell"><svg><use href="#p-maclin3"/></svg>Maclin3</div>
            <div class="cell"><svg><use href="#p-bend"/></svg>MSABND</div><div class="cell"><svg><use href="#p-bend"/></svg>MSOBND</div>
            <div class="cell"><svg><use href="#p-stub"/></svg>MBstub</div><div class="cell"><svg><use href="#p-mcfil"/></svg>Mcfil</div>
            <div class="cell"><svg><use href="#p-mclin"/></svg>Mclin</div><div class="cell"><svg><use href="#p-corn"/></svg>Mcorn</div>
            <div class="cell"><svg><use href="#p-cross"/></svg>Mcroso</div><div class="cell"><svg><use href="#p-curve"/></svg>Mcurve</div>
            <div class="cell"><svg viewBox="0 0 43 27"><use href="#p-curve"/><text x="30" y="24" font-size="9">2</text></svg>Mcurve</div><div class="cell"><svg><use href="#p-gap"/></svg>MGap</div>
            <div class="cell"><svg><use href="#p-cap1"/></svg>MICAP1</div><div class="cell"><svg><use href="#p-cap2"/></svg>MICAP2</div>
            <div class="cell"><svg><use href="#p-cap3"/></svg>MICAP3</div><div class="cell"><svg><use href="#p-cap4"/></svg>MICAP4</div>
          </div>
          <div class="scroll"><svg><use href="#up"/></svg><i class="thumb t-parts"></i></div>
        </div>
      </aside>
      <svg class="artwork" viewBox="747 185 643 453">
        <path d="M747 185h643v453H747z"/>
        <g fill="#ab4c3a"><path d="M778 399h137v36H778zM901 435h26v135h-26zM1040 428h22v135h-22zM1187 416h31v14h-31zM1205 404h20v26h-20zM1192 430h26v135h-26zM1223 399h136v36h-136z"/></g>
        <path d="M1050.500 406v22" stroke="#ab4c3a"/>
        <path d="M915 416.500h290" stroke="#b95a48"/>
        <path d="M747 416.500h31M1359 416.500h31M913.500 185v214M913.500 570v68" stroke="#335552"/>
        <path d="M778 416.500h137M1205 416.500h154M913.500 399v171" stroke="#b8604c"/>
        <g fill="none" stroke="#fdf0d0"><path d="M842.500 415.500h8v3h-8zM979.500 415.500h6v3h-6zM1115.500 415.500h6v3h-6zM1200.500 415.500h8v3h-8zM1286.500 415.500h8v3h-8zM910.500 415.500h8v3h-8zM1046.500 415.500h8v3h-8zM911.500 500.500h6v4h-6zM1046.500 493.500h8v4h-8zM1200.500 495.500h9v4h-9z"/></g>
        <path d="M911 414h6v5h-6zM912 433h5v5h-5zM1048 414h6v5h-6zM1048 425h5v5h-5zM1184 414h5v5h-5zM1221 414h5v5h-5zM1202 427h5v5h-5z" fill="#60b4ff"/>
        <g fill="#0ff"><path d="M776 414h5v5h-5zM1356 414h5v5h-5z"/><path d="M778.500 411.500l5 5-5 5-5-5zM1358.500 411.500l5 5-5 5-5-5z" fill="none" stroke="#0ff" stroke-dasharray="1.400 .8"/></g>
      </svg>
      <div class="scroll s-art"><svg><use href="#up"/></svg><i class="thumb t-art"></i></div>
      <aside class="help">
        <div class="phead"><span>Command Quick Help - Select</span><svg class="pf"><use href="#float"/></svg><svg class="px"><use href="#x"/></svg></div>
        <div class="htool"><svg><use href="#cog"/></svg></div>
        <div class="htext">
          <p><b>Click</b> and <b>drag</b> to select vertices</p>
          <p>Press <b>V</b> for combined vertex/object selection (disabled)</p>
          <p>Press and hold <b>Ctrl</b>, then Click and drag to select more</p>
          <p>vertices or objects</p>
          <p>Press and hold <b>Shift</b>, then Click to deselect</p>
          <p>&nbsp;</p>
          <p>Press <b>M</b> to Move an object using reference</p>
          <p>Press <b>C</b> to Copy an object using reference</p>
          <p>Press <b>Ctrl+R</b> to Rotate an object</p>
          <p>Press <b>Shift+X</b> to Mirror an object about x-axis</p>
          <p>Press <b>Shift+Y</b> to Mirror an object about y-axis</p>
          <p>Press <b>Ctrl+M</b> to Measure an object</p>
        </div>
      </aside>
    </div>
    <footer class="status"><span>mil</span><i></i><svg viewBox="0 0 7 8"><path d="M0 5h2v2H0zM4 5h2v2H4zM4 1h2v2H4z" fill="#aaa"/></svg></footer>
  </section>

  <section class="win schem">
    <header class="title"><svg class="app" viewBox="0 0 20 20"><path d="M.5.500h19v19H.5z" fill="#eef0fb" stroke="#4a82c0"/><path d="M1 6h6M7 3v6M10 3v6M10 6h6v3M1 14h3l2-3 2 6 2-6 2 6 2-6 2 4h3V9" fill="none" stroke="#6a3fa0" stroke-width="1.100"/></svg><span class="tt">cell_48 [MyFirstWorkspace_lib:cell_48:schematic] (Schematic):8</span>
      <span class="ctl"><svg><use href="#min"/></svg><svg><use href="#max"/></svg><svg><use href="#close"/></svg></span></header>
    <nav class="menu m-sch"><span>File</span><span>Edit</span><span>Select</span><span>View</span><span>Insert</span><span>Options</span><span>Tools</span><span>Layout</span><span>Simulate</span><span>Window</span><span>DynamicLink</span><span>DesignGuide</span><span>Help</span></nav>
    <div class="bar bar-sch">
      <svg class="i"><use href="#new"/></svg><svg class="i"><use href="#open"/></svg><svg class="i"><use href="#save"/></svg><svg class="i"><use href="#print"/></svg><b class="sep"></b><svg class="i"><use href="#cursor"/></svg><svg class="i"><use href="#del"/></svg><svg class="i"><use href="#undo"/></svg><svg class="i"><use href="#redo"/></svg>
      <b class="grip"></b><svg class="i"><use href="#fit"/></svg><svg class="i"><use href="#zsel"/></svg><svg class="i"><use href="#zp2"/></svg><svg class="i"><use href="#zm2"/></svg>
      <b class="grip"></b><svg class="i"><use href="#port"/></svg><svg class="i"><use href="#gnd"/></svg><svg class="i"><use href="#var"/></svg><svg class="i"><use href="#wire"/></svg><svg class="i"><use href="#name"/></svg><svg class="i"><use href="#rot"/></svg>
      <b class="grip"></b><svg class="i"><use href="#push"/></svg><svg class="i"><use href="#pop"/></svg><svg class="i"><use href="#dx2"/></svg><svg class="i"><use href="#dx"/></svg>
      <b class="grip"></b><svg class="i"><use href="#sch"/></svg><svg class="i"><use href="#gear"/></svg><svg class="i"><use href="#fork"/></svg><svg class="i"><use href="#opt"/></svg><svg class="i"><use href="#plot"/></svg>
    </div>
    <div class="sch-body">
      <aside class="parts parts-sch">
        <div class="phead"><span>Parts</span><svg class="pf"><use href="#float"/></svg><svg class="px"><use href="#x"/></svg></div>
        <div class="ptabs"><svg><use href="#clock"/></svg><svg><use href="#books"/></svg></div>
        <div class="psearch"><span class="inp">Search all li...</span><svg><use href="#filter"/></svg></div>
        <div class="pcombo"><span>ic Components</span><svg><use href="#chev"/></svg></div>
        <div class="plist">
          <div class="cells">
            <div class="cell"><svg><use href="#p-r"/></svg>R</div><div class="cell"><svg><use href="#p-l"/></svg>L</div>
            <div class="cell"><svg><use href="#p-c"/></svg>C</div><div class="cell"><svg><use href="#p-d"/></svg>Diode</div>
            <div class="cell"><svg><use href="#p-amp"/></svg>Amp</div><div class="cell"><svg><use href="#p-op"/></svg>OpAmp</div>
            <div class="cell"><svg><use href="#p-npn"/></svg>BJTNPN</div><div class="cell"><svg><use href="#p-bjt"/></svg>BJT</div>
          </div>
          <div class="scroll"><svg><use href="#up"/></svg><i class="thumb t-sparts"></i></div>
        </div>
      </aside>
      <svg class="sheet" viewBox="114 735 1606 295">
        <path d="M675.500 735v295" stroke="#d3cfce"/>
        <!-- wires -->
        <path d="M557.500 759.500h61M656 759.500h20M714 759.500h10M760 759.500h21M819 759.500h19M873 759.500h21M931 759.500h15M978 759.500h47.500V768M557.500 797v24M1025.500 801v11M694.500 776v67M799.500 776v36h-5v31M912.500 776v36h-5v31" fill="none" stroke="#c8308c"/>
        <!-- pins -->
        <path d="M557.500 757v10M618 759.500h8M650 759.500h6M676 759.500h6M707 759.500h7M722 759.500h8M754 759.500h6M780 759.500h7M811 759.500h8M836 759.500h8M867 759.500h6M892 759.500h8M924 759.500h7M944 759.500h8M620 761.500l3-4M724 761.500l3-4M838 761.500l3-4M946 761.500l3-4M694.500 771v7M799.500 771v7M912.500 771v7M694.500 843v5M794.500 843v5M907.500 843v5M693 846l3-3M793 846l3-3M906 846l3-3M557.500 788v10M557.500 819v5M1025.500 764v8M1025.500 793v9M1025.500 811v5" fill="none" stroke="#2c5ce0"/>
        <!-- symbols -->
        <g fill="none" stroke="#3838d0">
          <path d="M625.500 754.500h24v9h-24zM729.500 754.500h24v9h-24zM843.500 754.500h24v9h-24zM952.500 754.500h24v9h-24zM689.500 848.500h10v19h-10zM788.500 848.500h10v19h-10zM902.500 848.500h10v19h-10z"/>
          <path d="M682.500 755.500h24v8h-7.500v8h-9.500v-8h-7zM787.500 755.500h24v8h-7.500v8h-9.500v-8h-7zM900.500 755.500h24v8h-7.500v8h-9.500v-8h-7z"/>
          <path d="M550.500 763.500h14v29h-14zM1018.500 768.500h14v29h-14zM572.500 891.500h38v19h-38z"/>
          <path d="M557.500 763v4l-2.500 1.500 5 3-5 3 5 3-5 3 5 3-2.500 1.500v8M1025.500 768v4l-2.500 1.500 5 3-5 3 5 3-5 3 5 3-2.500 1.500v8"/>
          <path d="M552.500 824.500h10M554 827.500h7M555 830.500h5M1020.500 815.500h10M1022 818.500h7M1023 821h5"/>
        </g>
        <path d="M976 759.500h5M978.500 757v5M552 761.500h2M1019.500 766h2" stroke="#e81818" stroke-width="1.500"/>
        <path d="M436 771.500h95.500V756" fill="none" stroke="#1010c8" stroke-width="2"/>
        <path d="M434.500 754.500h96v16h-96zM455.500 754.500v16" fill="none" stroke="#2020d0" stroke-width="1.400"/>
        <g stroke="#1818b8" fill="none"><circle cx="445" cy="762.500" r="4.200" stroke-width="3" stroke-dasharray="2.500 1"/><circle cx="445" cy="762.500" r="1.500" fill="#1818b8"/></g>
        <text x="462" y="764" class="sp" textLength="57" lengthAdjust="spacingAndGlyphs">S-PARAMETERS</text>
        <text x="581" y="903.500" class="sp" textLength="18" lengthAdjust="spacingAndGlyphs">MSub</text>
        <g class="st">
          <text class="a" x="442" y="780" textLength="27">S_Param</text><text class="b" x="442" y="788">SP2</text><text x="442" y="796" textLength="38">Start=1 GHz</text><text x="442" y="804" textLength="38">Stop=5 GHz</text><text x="442" y="811">Step=</text>
          <text class="a" x="567" y="764">Term</text><text class="b" x="567" y="772">Term1</text><text x="567" y="780">Num=1</text><text x="567" y="788" textLength="30">Z=50 Ohm</text>
          <text class="a" x="626" y="772">MLIN</text><text class="b" x="626" y="780">TL12</text><text x="626" y="788" textLength="46">Subst="MSub1"</text><text x="626" y="795" textLength="34">W=100 mil</text><text x="626" y="803" textLength="34">L=369.0 mil</text>
          <text class="a" x="683" y="786" textLength="34">MTEE_ADS</text><text class="b" x="683" y="794">Tee1</text><text x="683" y="802" textLength="45">Subst="MSub1"</text><text x="683" y="810" textLength="35">W1=100 mil</text><text x="683" y="817" textLength="31">W2=70 mil</text><text x="683" y="825" textLength="28">W3=3 mil</text>
          <text class="a" x="730" y="772">MLIN</text><text class="b" x="730" y="780">TL3</text><text x="730" y="788" textLength="46">Subst="MSub1"</text><text x="730" y="795" textLength="27">W=3 mil</text><text x="730" y="803" textLength="34">L=369.0 mil</text>
          <text class="a" x="787" y="786" textLength="34">MTEE_ADS</text><text class="b" x="787" y="794">Tee2</text><text x="787" y="802" textLength="45">Subst="MSub1"</text><text x="787" y="810" textLength="28">W1=3 mil</text><text x="787" y="817" textLength="31">W2=60 mil</text><text x="787" y="825" textLength="28">W3=3 mil</text>
          <text class="a" x="844" y="772">MLIN</text><text class="b" x="844" y="780">TL7</text><text x="844" y="788" textLength="46">Subst="MSub1"</text><text x="844" y="795" textLength="27">W=3 mil</text><text x="844" y="803" textLength="34">L=369.0 mil</text>
          <text class="a" x="901" y="786" textLength="34">MTEE_ADS</text><text class="b" x="901" y="794">Tee3</text><text x="901" y="802" textLength="45">Subst="MSub1"</text><text x="901" y="810" textLength="28">W1=3 mil</text><text x="901" y="817" textLength="31">W2=70 mil</text><text x="901" y="825" textLength="35">W3=100 mil</text>
          <text class="a" x="953" y="772">MLIN</text><text class="b" x="953" y="780">TL13</text><text x="953" y="788" textLength="46">Subst="MSub1"</text><text x="953" y="795" textLength="34">W=100 mil</text><text x="953" y="803" textLength="34">L=369.0 mil</text>
          <text class="a" x="1035" y="769">Term</text><text class="b" x="1035" y="777">Term2</text><text x="1035" y="785">Num=2</text><text x="1035" y="792" textLength="30">Z=50 Ohm</text>
          <text class="a" x="702" y="849">MLOC</text><text class="b" x="702" y="857">TL9</text><text x="702" y="865" textLength="46">Subst="MSub1"</text><text x="702" y="873" textLength="28">W=70 mil</text><text x="702" y="880" textLength="29">L=369 mil</text>
          <text class="a" x="801" y="849">MLOC</text><text class="b" x="801" y="857">TL11</text><text x="801" y="865" textLength="46">Subst="MSub1"</text><text x="801" y="873" textLength="28">W=60 mil</text><text x="801" y="880" textLength="29">L=369 mil</text>
          <text class="a" x="914" y="849">MLOC</text><text class="b" x="914" y="857">TL10</text><text x="914" y="865" textLength="46">Subst="MSub1"</text><text x="914" y="873" textLength="28">W=70 mil</text><text x="914" y="880" textLength="29">L=369 mil</text>
          <text class="a" x="579" y="918">MSUB</text><text class="b" x="579" y="926">MSub1</text><text x="579" y="934">H=50 mil</text><text x="579" y="942">Er=3.66</text><text x="579" y="950">Mur=1</text><text x="579" y="957" textLength="34">Cond=5E+7</text><text x="579" y="965" textLength="60">Hu=3.93701e+34 mil</text><text x="579" y="973">T=1.2 mil</text><text x="579" y="981">TanD=0</text><text x="579" y="989" textLength="37">Rough=0 mil</text><text x="579" y="996">Bbase=</text><text x="579" y="1004">Dpeaks=</text>
        </g>
      </svg>
      <div class="scroll s-sheet"><svg><use href="#up"/></svg><i class="thumb t-sheet"></i></div>
    </div>
  </section>

  <footer class="taskbar">
    <div class="search"><svg viewBox="0 0 16 20"><circle cx="8" cy="8" r="6.500" fill="none" stroke="#222" stroke-width="1.500"/><path d="M4 13l-6 6" stroke="#222" stroke-width="1.500"/></svg><span>Search for anything</span></div>
    <div class="apps">
      <div><svg viewBox="0 0 30 30"><circle cx="15" cy="15" r="8.500" fill="none" stroke="#fff" stroke-width="2.600"/></svg></div>
      <div class="tv"><svg viewBox="0 0 30 30"><path d="M5 5v4h11V5M5 25v-4h11v4M5 11.500h11v7H5zM22 5v20" fill="none" stroke="#fff" stroke-width="1.300"/><path d="M20 10h4v3h-4z" fill="#fff"/></svg></div>
      <div class="store"><svg viewBox="0 0 30 30"><path d="M9 7V1h12v6" fill="none" stroke="#ddd" stroke-width="2"/><path d="M1 5h28v25H1z" fill="#f3f3f3"/><path d="M10 14h5v5h-5z" fill="#f25022"/><path d="M16 14h5v5h-5z" fill="#7fba00"/><path d="M10 20h5v5h-5z" fill="#00a4ef"/><path d="M16 20h5v5h-5z" fill="#ffb900"/></svg></div>
      <div><svg viewBox="0 0 30 30"><path d="M1 3h11l2 3h15v18H1z" fill="#e8a317"/><path d="M1 7h28v19H1z" fill="#ffd768"/><path d="M6 15h18v12h-5v-5h-8v5H6z" fill="#3f94dc"/></svg></div>
      <div><svg viewBox="0 0 30 30"><path d="M0 12L15 1l15 11v4H0z" fill="#0f5fae"/><path d="M0 11l15 10L30 11v18H0z" fill="#28a8ea"/><path d="M30 11v18L12 17z" fill="#1687d4"/><path d="M4 11h22L15 20z" fill="#f4f6f8"/></svg></div>
      <div><svg viewBox="0 0 30 30"><path d="M0 0h30v30H0z" fill="#fff"/><text x="15" y="20" text-anchor="middle" font-family="Open Sans" font-weight="bold" font-size="23" fill="#232f3e">a</text><path d="M6 22c6 4 13 4 18 0" fill="none" stroke="#ff9900" stroke-width="2"/></svg></div>
      <div class="run"><svg viewBox="0 0 30 30"><path d="M15 0c2 8 11 12 11 20 0 6-5 10-11 10S4 26 4 20C4 12 13 9 15 0z" fill="url(#gDrop)"/></svg></div>
      <div class="run"><svg viewBox="0 0 30 30"><circle cx="15" cy="15" r="14" fill="#ffcd40"/><path d="M15 15L2.900 8A14 14 0 0 1 27.100 8z" fill="#db4437"/><path d="M2.900 8L9 18.500 15 29A14 14 0 0 1 2.900 8z" fill="#0f9d58"/><path d="M27.100 8H15l6 11-6 10A14 14 0 0 0 27.100 8z" fill="#ffcd40"/><circle cx="15" cy="15" r="6.500" fill="#fff"/><circle cx="15" cy="15" r="5.200" fill="#4285f4"/></svg></div>
      <div><svg viewBox="0 0 30 30"><path d="M2 3h26v27H2z" fill="#222"/><path d="M1 2h25v25H1z" fill="#f4ee40"/><path d="M4 6l5-1M5 10l6 2M4 20h7M5 15l4 3M7 24h4M14 19v5h8v-7" fill="none" stroke="#222" stroke-width="1.500"/><path d="M16 15l8-14 5 3-8 13-5 4z" fill="#d82020" stroke="#600"/></svg></div>
      <div><svg viewBox="0 0 30 30"><path d="M2 6v19h6V14z" fill="#4285f4"/><path d="M28 6v19h-6V14z" fill="#34a853"/><path d="M2 8q3-4 7 0l6 5 6-5q4-4 7 0v4L15 21 2 12z" fill="#ea4335"/><path d="M22 8q4-3 6 0v4l-6 4z" fill="#fbbc04"/></svg></div>
      <div class="run"><svg viewBox="0 0 30 30"><path d="M0 15C0 7 7 0 15 0s15 6 15 13c0 5-4 8-9 8-3 0-5-1-3-3 2-4-1-8-6-8-7 0-10 5-10 9z" fill="url(#gEdge)"/><path d="M0 17c0-5 5-8 11-7-4 3-4 9 0 13 4 3 9 3 15 1-5 8-18 8-23 0-2-2-3-4-3-7z" fill="#1a73c8"/></svg></div>
      <div class="run"><svg viewBox="0 0 30 30"><rect x="1" y="1" width="28" height="28" rx="4" fill="#b30b00"/><path d="M8 22c4-2 8-10 7-14 0-3-3-2-2 1 1 5 5 9 9 9 3 0 2-3-2-3-5 0-10 2-13 5-1 2 0 2 1 2z" fill="none" stroke="#fff" stroke-width="1.500"/></svg></div>
      <div class="run"><svg viewBox="0 0 30 30"><path d="M8 1h22v9H8z" fill="#41a5ee"/><path d="M8 9h22v7H8z" fill="#2b7cd3"/><path d="M8 15h22v7H8z" fill="#185abd"/><path d="M8 21h22v8H8z" fill="#103f91"/><path d="M0 7h16v16H0z" fill="#185abd"/><text x="8" y="20" text-anchor="middle" font-family="Open Sans" font-weight="bold" font-size="13" fill="#fff">W</text></svg></div>
      <div class="run cur"><svg viewBox="0 0 30 30"><path d="M0 0h30v21H0z" fill="url(#gAds)"/><path d="M0 22h30v8H0z" fill="#e4002b"/><path d="M2 18h3V4h4v14h3V4h2M17 11c0-9 5-9 5 0s6 9 6 0" fill="none" stroke="#f8e0a0" stroke-width="1.800"/></svg></div>
      <div class="run"><svg viewBox="0 0 30 30"><path d="M0 0h30v30H0z" fill="#f5f2fb"/><path d="M0 0h30v6H0z" fill="#22a5e8"/><path d="M1 9h22M1 12h22M1 15h22M1 20h22M1 23h22M1 26h22" stroke="#b4acd8" stroke-width="1.200"/><path d="M24 8h4v9h-4zM24 19h4v8h-4z" fill="#dcd6f4" stroke="#6a5aae"/></svg></div>
      <div class="run"><svg viewBox="0 0 24 24"><use href="#plot"/></svg></div>
    </div>
    <div class="tray">
      <svg viewBox="0 0 20 20"><path d="M2 14l8-8 8 8" fill="none" stroke="#fff" stroke-width="1.400"/></svg>
      <svg viewBox="0 0 20 20"><path d="M5.500 2L10 5 5.500 8 1 5zM14.500 2L19 5l-4.500 3L10 5zM5.500 8L10 11l-4.500 3L1 11zM14.500 8l4.500 3-4.500 3-4.500-3zM10 13l4 2.500-4 2.800-4-2.800z" fill="#fff"/></svg>
      <svg viewBox="0 0 20 20"><path d="M3 9c0-6 12-6 13 0z" fill="#aaa"/><path d="M0 13c0-4 4-6 7-4l11 7H3c-2 0-3-1-3-3z" fill="#ddd"/><path d="M2 16l8-5c3-2 10-1 10 3 0 2-1 2-3 2z" fill="#fff"/></svg>
      <svg viewBox="0 0 20 20"><path d="M5 2c3-1.500 7-1.500 10 0M5 18c3 1.500 7 1.500 10 0M4 5.500h9v9H4zM13 9l4-3v8l-4-3" fill="none" stroke="#fff" stroke-width="1.200"/></svg>
      <svg viewBox="0 0 20 20"><path d="M1 5h16v10H1zM18.500 8v4" fill="none" stroke="#fff" stroke-width="1.300"/><path d="M3 7h7v6H3z" fill="#fff"/></svg>
      <svg viewBox="0 0 20 20"><path d="M3 17C3 9 9 3 17 3M7 17C7 11 11 7 17 7M11 17c0-3 2-6 6-6" fill="none" stroke="#ddd" stroke-width="1.200"/><circle cx="15.500" cy="15.500" r="1.700" fill="#fff"/></svg>
      <svg viewBox="0 0 20 20"><path d="M1 7h3l4-4v14l-4-4H1z" fill="none" stroke="#fff" stroke-width="1.200"/><path d="M11 8c1 1 1 3 0 4" fill="none" stroke="#fff"/><path d="M14 6c2 2 2 6 0 8M17 3c3 4 3 10 0 14" fill="none" stroke="#999"/></svg>
      <svg viewBox="0 0 20 20"><path d="M16 1l-3 1-7 12v3l3-2 8-12zM6 12c-5-2-7 5-3 6 4 1 5-3 8-6 2-2 8-3 8-1s-4 2-7 1" fill="none" stroke="#fff" stroke-width="1.300"/></svg>
    </div>
    <div class="clock"><span>11:49 AM</span><span>5/21/2021</span></div>
  </footer>
</main>
</body>
</html>
```
FILE: styles.css
```css
* { box-sizing: border-box; }
html, body { margin: 0; padding: 0; }
body { width: 1778px; height: 1080px; overflow: hidden; font: 15px/20px "Open Sans", "Noto Sans", sans-serif; color: #000; }
.sprite { position: absolute; width: 0; height: 0; }
p { margin: 0; }
svg { display: block; flex: none; overflow: hidden; }

.zt { font: bold 14px "Liberation Sans", sans-serif; fill: #fff; }
.rt { font: bold 13px "Liberation Sans", sans-serif; fill: #111; }
.rts { font: bold 6px "Liberation Sans", sans-serif; fill: #111; }
.em { font: 12px "Liberation Sans", sans-serif; fill: #b01030; stroke: #b01030; stroke-width: .4px; text-anchor: middle; }
.emb { font: bold 12px "Liberation Sans", sans-serif; fill: #c01828; text-anchor: middle; }
.vt { font-family: "Liberation Sans", sans-serif; font-weight: bold; text-anchor: middle; fill: #111; }
.tl { font: bold 12px "Liberation Sans", sans-serif; }
.ln { fill: none; stroke: #000; stroke-width: 1; }
.yb { fill: #fbf57a; stroke: #000; stroke-width: 1; }
.rd { fill: none; stroke: #f01010; stroke-width: 1.3; }

.desktop { position: relative; width: 1778px; height: 1080px; overflow: hidden; background: linear-gradient(90deg, #5d8db5, #6e9bc0); }

.word { position: absolute; left: 685px; top: 0; width: 1093px; height: 1030px; background: #fff; border-top: 1px solid #888; }
.word::before { content: ""; position: absolute; inset: 0 0 auto; height: 30px; background: #2b579a; }
.word::after { content: ""; position: absolute; inset: auto 0 0; height: 28px; background: #f3f0ee; border-top: 1px solid #c8c4c2; }
.word > * { position: absolute; }
.autosave, .wtitle { color: #8fa7cc; font-size: 14px; top: 11px; white-space: nowrap; }
.autosave { left: 29px; }
.wtitle { left: 446px; width: 496px; letter-spacing: -.2px; }
.toggle { left: 98px; top: 10px; width: 47px; height: 20px; border: 1.5px solid #dfe7f3; border-radius: 10px; color: #dfe7f3; font-size: 13px; line-height: 18px; padding-left: 22px; }
.toggle i { position: absolute; left: 5px; top: 4px; width: 10px; height: 10px; border-radius: 5px; background: #fff; }
.wicons { left: 161px; top: 12px; width: 200px; height: 20px; }
.wdeco { left: 977px; top: 0; width: 116px; height: 20px; }

.win { position: absolute; background: #fff; display: flex; flex-direction: column; }
.title { position: relative; display: flex; align-items: center; flex: none; white-space: nowrap; }
.ctl { margin-left: auto; display: flex; }
.ctl svg { width: 13px; height: 13px; }
.menu { display: grid; align-items: center; flex: none; letter-spacing: -.35px; white-space: nowrap; }
.bar { display: flex; align-items: center; flex: none; height: 34px; background: #f0f0f0; border-bottom: 1px solid #b4b4b4; border-top: 1px solid #fafafa; overflow: hidden; }
.i { width: 31px; height: 24px; }
.i.on { height: 29px; padding: 2px 3px; background: #c0dcf3; border: 1px solid #90c8f6; }
.sep { flex: none; width: 7.5px; height: 28px; background: linear-gradient(#ccc, #ccc) 4px 0 / 1px 100% no-repeat; }
.grip { flex: none; width: 12px; height: 32px; margin-left: 2px; border-left: 1px solid #b4b4b4; background: repeating-linear-gradient(#aaa 0 2px, transparent 2px 4.7px) 4px 3px / 2px 26px no-repeat; }
.grip.first { margin-left: 0; width: 10.5px; border-left-color: transparent; }
.combo { flex: none; display: flex; align-items: center; justify-content: space-between; width: 168px; height: 24px; padding: 0 5px 0 3px; background: #e2e2e2; border: 1px solid #aaa; font: 14px "DejaVu Sans Condensed", "Noto Sans", sans-serif; letter-spacing: -.3px; }
.combo svg, .pcombo svg { width: 11px; height: 11px; }
.bar-em .sep { width: 7px; }

/* data display */
.dds { left: 0; top: 1px; width: 623px; height: 640px; color: #999; }
.dds .title { height: 38px; padding-right: 24px; }
.dds .tt { margin-left: -6px; letter-spacing: -.2px; font-size: 15.5px; }
.dds .ctl { color: #888; gap: 45px; }
.m-dds { height: 24px; padding-left: 13px; grid-template-columns: 47.5px 52.5px 62px 62.5px 68.5px 50.5px 48px 71.5px auto; }
.bar-dds { height: 35px; padding-left: 0; }
.bar-dds .i:first-child { margin-left: -3px; }
.bar-dds .sep { width: 7px; }
.more { width: 9px; height: 11px; }
.more.m1 { margin: 0 3px 0 12px; }
.more.m2 { margin: 0 4px 0 4px; }
.bar-dds .grip { margin-left: 0; }
.c-cell { width: 215px; height: 30px; color: #000; margin-right: 2px; font: 14.5px "Open Sans", sans-serif; letter-spacing: -.45px; }
.dds-body { flex: 1; display: flex; background: #fff; }
.dds-tools { width: 24px; flex: none; background: #f0f0f0; }
.tx { width: 18px; height: 23px; margin-top: 1px; background: #d8d8d8; border: 1px solid #bbb; border-left: 0; display: flex; align-items: center; }
.tx svg { width: 12px; height: 12px; margin-left: -1px; }
.tools { width: 19px; height: 540px; margin-top: 2px; padding-top: 1px; border-right: 1px solid #778; border-top: 1px solid #778; background: #f0f0f0; display: flex; flex-direction: column; gap: 3.5px; }
.tools div { width: 15px; height: 38.500px; background: #e3e3e3; border: 1px solid #aaa; border-left: 0; }
.tools svg { width: 16px; height: 38px; margin: -1px 0; }
.graph { width: 574px; height: 540px; }
.ar { font-family: "Liberation Sans", sans-serif; }
.yl { text-anchor: end; letter-spacing: -.6px; }
.xl { text-anchor: middle; letter-spacing: -1px; }

/* layout editor */
.layout { left: 598px; top: 20px; width: 1200px; height: 820px; box-shadow: 0 0 10px rgba(0, 0, 0, .45); border-bottom: 1px solid #888; }
.layout .title { height: 36px; padding: 0 38px 0 9px; }
.layout .tt { margin-left: 5px; font-size: 15.5px; letter-spacing: -.2px; color: #999; }
.app { width: 20px; height: 20px; }
.layout .ctl { gap: 45px; color: #777; }
.m-lay { height: 27px; padding-left: 7.5px; color: #999; grid-template-columns: 39.5px 41.5px 56px 48.5px 51.5px 68.5px 50.5px 84.5px 36.5px 71.5px 101px auto; }
.lay-body { flex: 1; min-height: 0; display: flex; background: #f0f0f0; }
.parts { flex: none; width: 149px; display: flex; flex-direction: column; border-left: 1px solid #aaa; }
.phead { flex: none; display: flex; align-items: center; width: 144px; height: 23px; margin-top: 1px; padding: 1px 7px 0 3px; background: #d9d9d9; border: 1px solid #bbb; font-size: 15.5px; letter-spacing: -.35px; white-space: nowrap; }
.phead .pf { width: 11px; height: 12px; margin: -2px 0 0 auto; }
.phead .px { width: 13px; height: 13px; margin: -2px 0 0 13px; }
.ptabs { display: flex; gap: 19px; padding: 13px 0 0 11px; height: 43px; }
.ptabs svg { width: 18px; height: 18px; }
.psearch { display: flex; align-items: center; height: 24px; }
.inp { width: 114px; height: 24px; border: 1px solid #777; background: #fff; color: #767676; line-height: 22px; padding-left: 2px; font-size: 13.5px; font-family: "Noto Sans", sans-serif; letter-spacing: -.4px; white-space: nowrap; overflow: hidden; }
.psearch svg { width: 14px; height: 17px; margin-left: 8px; }
.pcombo { flex: none; display: flex; align-items: center; justify-content: space-between; width: 143px; height: 23px; margin-top: 16px; padding: 0 5px 0 4px; border: 1px solid #777; background: #fff; font-size: 13.5px; letter-spacing: -.5px; white-space: nowrap; }
.plist { flex: 1; min-height: 0; overflow: hidden; display: flex; justify-content: space-between; width: 143px; border: 1px solid #778; padding-left: 1px; }
.cells { display: grid; grid-template-columns: 43px 43px; gap: 3.5px 3px; align-content: start; padding-top: 1px; }
.cell { height: 38.500px; background: #e2e2e2 linear-gradient(135deg, #f6ee4a 50%, transparent 50%) 4px 2px / 4px 4px no-repeat; border: 1px solid #a8a8a8; font: 9.3px/9px "Liberation Sans", sans-serif; text-align: center; color: #000; -webkit-text-stroke: .2px #000; }
.cell svg { width: 43px; height: 27px; margin: -1px -1px -1px; }
.scroll { width: 20px; flex: none; border-left: 1px solid #fff; background: #f0f0f0; display: flex; flex-direction: column; align-items: center; }
.scroll svg { width: 12px; height: 12px; margin: 5px 0 3px; }
.thumb { display: block; width: 19px; background: #cdcdcd; }
.t-parts { height: 185px; }
.artwork { width: 643px; height: 453px; }
.s-art { width: 26px; align-items: flex-start; }
.s-art svg { margin: 5px 0 165px 4px; }
.t-art { height: 242px; }
.help { flex: none; width: 382px; }
.help .phead { width: 382px; padding-right: 20px; padding-left: 4px; }
.help .phead span { letter-spacing: -.22px; }
.htool { height: 25px; margin-top: 2px; background: #fff; padding: 3px 0 0 9px; }
.htool svg { width: 18px; height: 18px; }
.htext { height: 544px; margin-top: 7px; padding: 5px 0 0 4px; background: #fff; border: 1px solid #777; font: 12.4px/16px "DejaVu Sans Condensed", "Noto Sans", sans-serif; letter-spacing: .13px; white-space: nowrap; }
.htext b { letter-spacing: -.2px; }
.status { flex: none; height: 52px; display: flex; align-items: center; background: #f0f0f0; padding: 23px 0 0 1142px; }
.status i { width: 1px; height: 21px; background: #ccc; margin: 0 6px 0 5px; }
.status svg { width: 7px; height: 8px; margin-top: 8px; }
.status span { width: 19px; letter-spacing: -.5px; }

/* schematic editor */
.schem { left: -1px; top: 637px; width: 1743px; height: 393px; border: 1px solid #666; border-bottom: 0; box-shadow: 0 0 16px rgba(0, 0, 0, .45); }
.schem .title { height: 38px; padding: 0 23px 1px 3px; }
.schem .tt { margin-left: 5px; font-size: 15.5px; letter-spacing: -.24px; }
.schem .ctl { gap: 46px; margin-bottom: 2px; }
.m-sch { height: 24px; padding: 0 0 1px 2.5px; grid-template-columns: 38.5px 42px 56px 48px 52px 68.5px 50.5px 59.5px 74.5px 71px 100px 101px auto; }
.bar-sch { height: 35px; padding: 0 0 1px 4.5px; }
.sch-body { flex: 1; min-height: 0; display: flex; background: #f0f0f0; }
.parts-sch { width: 114px; border-left: 0; }
.parts-sch .phead { width: 109px; padding-left: 0; border-left: 0; }
.parts-sch .phead span { margin-left: -2px; }
.parts-sch .ptabs { padding-left: 6px; }
.parts-sch .inp { width: 80px; padding-left: 0; border-left: 0; text-indent: -3px; }
.parts-sch .pcombo { width: 109px; padding-left: 0; border-left: 0; }
.parts-sch .plist { width: 109px; border-left: 0; padding-left: 0; }
.parts-sch .cells { margin-left: -3px; }
.t-sparts { height: 160px; }
.sheet { width: 1606px; height: 295px; background: #ede9e8; }
.s-sheet { width: 21px; }
.s-sheet svg { margin: 5px 0 142px; }
.t-sheet { height: 106px; }
.sp { font: 7.5px "Liberation Sans", sans-serif; fill: #101040; }
.st { font: 6.6px "Liberation Sans", sans-serif; fill: #24248c; }
.st .a { fill: #4a9af0; }
.st .b { fill: #3c30f0; }

/* taskbar */
.taskbar { position: absolute; left: 0; top: 1030px; width: 1778px; height: 50px; display: flex; background: linear-gradient(90deg, #454343 0 92%, #242424 100%); color: #fff; }
.search { flex: none; width: 410px; display: flex; align-items: center; background: #f2f2f2; color: #222; border-top: 1px solid #b8b8b8; border-bottom: 1px solid #b8b8b8; font-size: 17px; }
.search svg { width: 16px; height: 20px; }
.search span { margin-left: 14px; }
.apps { flex: none; display: flex; width: 948px; }
.apps div { flex: none; width: 58.8px; height: 50px; padding-top: 10px; display: flex; justify-content: center; align-items: flex-start; }
.apps svg { width: 30px; height: 30px; }
.apps .tv { margin-left: 1.5px; }
.apps .store { margin-left: 4px; }
.run { background: linear-gradient(#76b9ed, #76b9ed) 50% 100% / 48px 3px no-repeat; }
.apps .cur { background: linear-gradient(#76b9ed, #76b9ed) 50% 100% / 57px 3px no-repeat, linear-gradient(#6c6c6c, #6c6c6c) 1px 0 / 57px 100% no-repeat; }
.tray { flex: none; width: 317px; display: flex; justify-content: space-between; align-items: center; padding-left: 12px; }
.tray svg { width: 20px; height: 20px; }
.clock { flex: none; width: 90px; display: flex; flex-direction: column; align-items: center; line-height: 23px; padding-top: 2px; margin-left: 12px; font-size: 15px; letter-spacing: -.35px; }
```
